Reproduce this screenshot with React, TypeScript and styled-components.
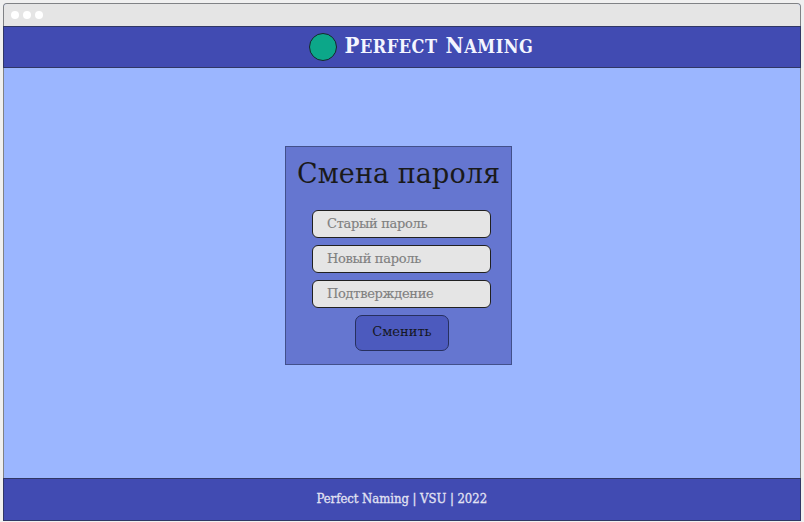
import React from "react";
import styled, { createGlobalStyle } from "styled-components";

const GlobalStyle = createGlobalStyle`
  * { box-sizing: border-box; }
  body {
    margin: 0;
    background: #f0f0f0;
    font-family: "DejaVu Serif", serif;
    overflow: hidden;
  }
`;

const Page = styled.div`
  height: 522px;
  padding: 3px 3px 1px;
`;

const Browser = styled.div`
  height: 518px;
  display: flex;
  flex-direction: column;
  border: 1px solid #808285;
  border-bottom: 0;
  border-radius: 4px 4px 0 0;
  background: #9bb6ff;
`;

const TitleBar = styled.div`
  height: 22px;
  flex: none;
  display: flex;
  align-items: center;
  gap: 4px;
  padding-left: 7px;
  border-radius: 3px 3px 0 0;
  background: #e5e5e5;
`;

const Dot = styled.span`
  width: 8px;
  height: 8px;
  border-radius: 50%;
  background: #fff;
`;

const Bar = styled.div<{ $height: number }>`
  flex: none;
  height: ${(p) => p.$height}px;
  margin: 0 -1px;
  display: flex;
  justify-content: center;
  align-items: center;
  border: 1px solid #303765;
  background: #414bb2;
`;

const Header = styled(Bar)`
  gap: 8px;
  padding-left: 39px;
`;

const Logo = styled.span`
  flex: none;
  width: 28px;
  height: 28px;
  border: 1px solid #17262b;
  border-radius: 50%;
  background: #0ca789;
`;

const Brand = styled.span`
  width: 190px;
  margin-top: -2px;
  white-space: nowrap;
  color: #f4f5ff;
  font-family: "DejaVu Serif Condensed", "DejaVu Serif", serif;
  font-stretch: condensed;
  font-size: 18px;
  line-height: 28px;
  font-weight: 700;
  letter-spacing: 0.5px;
  word-spacing: 2px;
  text-transform: uppercase;
`;

const Initial = styled.span`
  font-size: 22px;
`;

const Main = styled.main`
  flex: 1;
  display: flex;
  justify-content: center;
  align-items: flex-start;
  padding: 78px 7px 0 0;
`;

const Card = styled.form`
  width: 227px;
  height: 219px;
  display: flex;
  flex-direction: column;
  align-items: center;
  padding-left: 6px;
  border: 1px solid #42508b;
  background: #6576d0;
`;

const Title = styled.h1`
  width: 203px;
  margin: 9px 6px 18px 0;
  white-space: nowrap;
  color: #1a1a1a;
  font-size: 27px;
  line-height: 36px;
  font-weight: 400;
  letter-spacing: 0.08px;
`;

const Field = styled.input`
  flex: none;
  width: 179px;
  height: 28px;
  margin-bottom: 7px;
  padding: 0 13px 1px 14px;
  border: 1px solid #202020;
  border-radius: 6px;
  background: #e5e5e5;
  font: inherit;
  font-size: 13px;
  letter-spacing: -0.3px;
  outline: none;
  &::placeholder {
    color: #808080;
    opacity: 1;
    -webkit-text-stroke: 0.15px currentColor;
  }
`;

const Submit = styled.button`
  flex: none;
  width: 94px;
  height: 36px;
  padding: 0 0 3px 1px;
  border: 1px solid #27305f;
  border-radius: 7px;
  background: #4c5abe;
  color: #151723;
  font: inherit;
  font-size: 13px;
`;

const FooterText = styled.span`
  width: 171px;
  margin-top: -2px;
  white-space: nowrap;
  color: #e1e2f3;
  font-family: "DejaVu Serif Condensed", "DejaVu Serif", serif;
  font-stretch: condensed;
  font-size: 13px;
  line-height: 18px;
  letter-spacing: -0.05px;
  -webkit-text-stroke: 0.3px currentColor;
`;

const fields = ["Старый пароль", "Новый пароль", "Подтверждение"];

export default function App() {
  return (
    <Page>
      <GlobalStyle />
      <Browser>
        <TitleBar><Dot /><Dot /><Dot /></TitleBar>
        <Header as="header" $height={42}>
          <Logo />
          <Brand><Initial>P</Initial>erfect <Initial>N</Initial>aming</Brand>
        </Header>
        <Main>
          <Card>
            <Title>Смена пароля</Title>
            {fields.map((label) => <Field key={label} placeholder={label} />)}
            <Submit type="button">Сменить</Submit>
          </Card>
        </Main>
        <Bar as="footer" $height={43}>
          <FooterText>Perfect Naming | VSU | 2022</FooterText>
        </Bar>
      </Browser>
    </Page>
  );
}
